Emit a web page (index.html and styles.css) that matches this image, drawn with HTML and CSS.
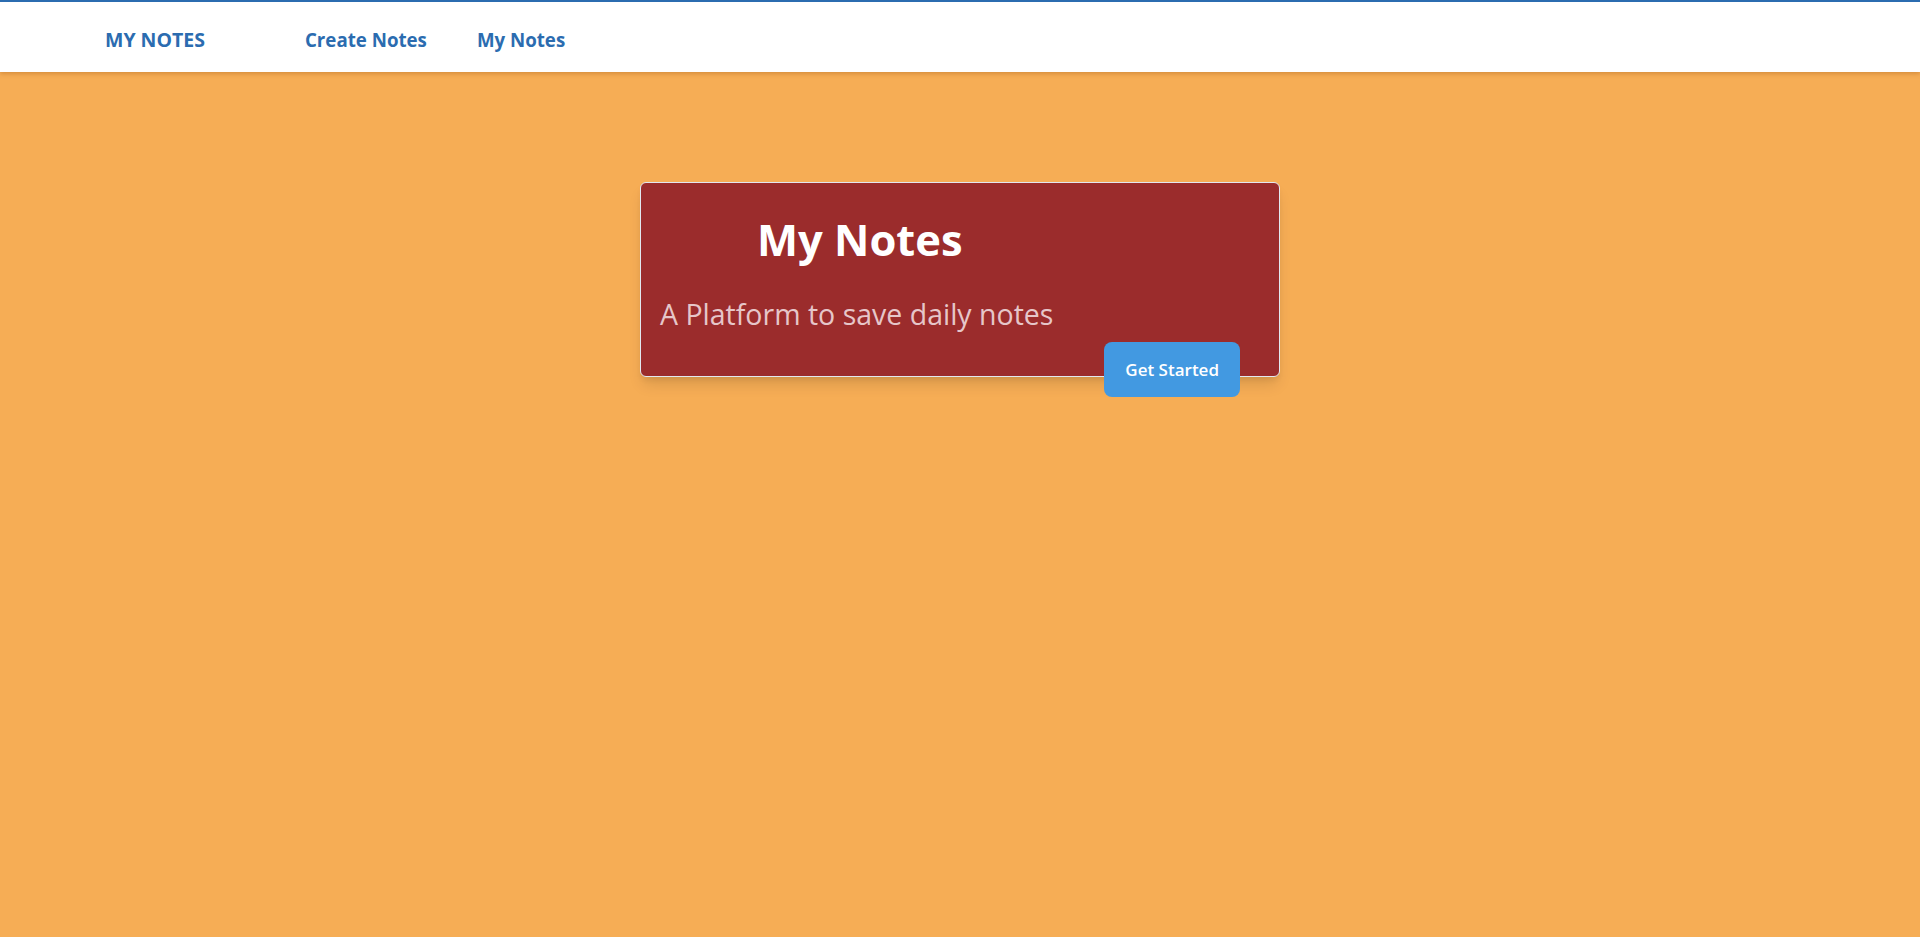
FILE: index.html
```html
<!DOCTYPE html>
<html lang="en">
<head>
<meta charset="utf-8">
<title>My Notes</title>
<link rel="stylesheet" href="styles.css">
</head>
<body>
<nav class="navbar">
  <a class="brand" href="#">MY NOTES</a>
  <div class="nav-links">
    <a class="nav-link" href="#">Create Notes</a>
    <a class="nav-link" href="#">My Notes</a>
  </div>
</nav>
<main class="main">
  <section class="card">
    <h1 class="card-title">My Notes</h1>
    <p class="card-text">A Platform to save daily notes</p>
    <div class="card-actions">
      <button class="btn" type="button">Get Started</button>
    </div>
  </section>
</main>
</body>
</html>
```

FILE: styles.css
```css
* { box-sizing: border-box; }
html, body { margin: 0; padding: 0; }
body {
  font-family: "Open Sans", "Noto Sans", sans-serif;
  background: #f6ad55;
  min-height: 937px;
}
.navbar {
  height: 72px;
  background: #ffffff;
  border-top: 2px solid #2b6cb0;
  box-shadow: 0 2px 4px rgba(160, 90, 20, 0.35);
  display: flex;
  align-items: center;
  padding-left: 105px;
  padding-top: 5px;
  position: relative;
  z-index: 1;
}
.brand, .nav-link {
  color: #2b6cb0;
  font-weight: 700;
  font-size: 18.7px;
  text-decoration: none;
  line-height: 26px;
}
.brand { font-size: 19.5px; }
.nav-links {
  display: flex;
  gap: 50px;
  margin-left: 100px;
}
.main {
  display: flex;
  justify-content: center;
  padding-top: 110px;
}
.card {
  width: 640px;
  height: 195px;
  background: #9b2c2c;
  border: 1px solid #e2e8f0;
  border-radius: 6px;
  box-shadow: 0 10px 15px -3px rgba(0,0,0,0.12), 0 4px 6px -2px rgba(0,0,0,0.08);
  padding: 27px 39px 0 19px;
}
.card-title {
  margin: 0;
  padding-left: 97px;
  color: #ffffff;
  font-size: 43.5px;
  line-height: 60px;
  font-weight: 700;
}
.card-text {
  margin: 25px 0 0 0;
  color: #e6c6c9;
  font-size: 28.5px;
  line-height: 39px;
}
.card-actions {
  display: flex;
  justify-content: flex-end;
  margin-top: 8px;
}
.btn {
  height: 55px;
  padding: 0 21px;
  background: #4299e1;
  color: #ffffff;
  border: none;
  border-radius: 8px;
  font-family: inherit;
  font-weight: 600;
  font-size: 17px;
}
```
